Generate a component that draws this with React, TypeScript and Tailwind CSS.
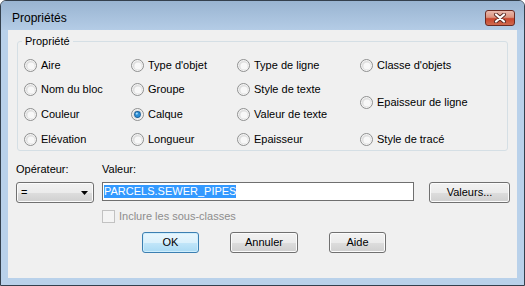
import { twMerge } from "tailwind-merge";
import type { ReactNode } from "react";

const Radio = ({ on }: { on?: boolean }) => (
  <svg width="13" height="13" viewBox="0 0 13 13" className="shrink-0">
    <circle cx="6.5" cy="6.5" r="6" fill="#f4f4f4" stroke="#8e8f8f" />
    <circle cx="6.5" cy="6.5" r="4.6" fill="#dedede" />
    <circle cx="7" cy="7" r="3.6" fill="#f8f8f8" />
    {on && (
      <>
        <circle cx="6.5" cy="6.5" r="3.4" fill="#1b5f99" />
        <circle cx="6.5" cy="6.5" r="2.5" fill="#2d8fd6" />
        <circle cx="5.8" cy="5.6" r="1.1" fill="#a8dcfa" />
      </>
    )}
  </svg>
);

const Option = ({ label, on, className }: { label: string; on?: boolean; className?: string }) => (
  <div className={twMerge("flex items-center gap-[4px]", className)}>
    <Radio on={on} />
    <span>{label}</span>
  </div>
);

const WinButton = ({
  children,
  def,
  className,
}: {
  children: ReactNode;
  def?: boolean;
  className?: string;
}) => (
  <div
    className={twMerge(
      "flex h-[21px] items-center justify-center rounded-[3px] border",
      def
        ? "border-[#3c7fb1] bg-[linear-gradient(#e9f6fd_0%,#dbf1fc_50%,#c2e6f9_51%,#a9daf4_100%)] shadow-[inset_0_0_0_1px_#cfeefd]"
        : "border-[#707070] bg-[linear-gradient(#f2f2f2_0%,#ebebeb_50%,#dddddd_51%,#cfcfcf_100%)] shadow-[inset_0_0_0_1px_#fbfbfb]",
      className
    )}
  >
    {children}
  </div>
);

export default function App() {
  return (
    <div className="h-[286px] w-[525px] bg-white font-['Liberation_Sans',Arial,sans-serif] text-[11px] leading-[13px] text-black">
      <div className="flex h-full w-full flex-col rounded-t-[6px] border border-[#34404d] bg-[#b9d1ea]">
        {/* title bar */}
        <div className="flex h-[29px] items-center justify-between rounded-t-[5px] bg-[linear-gradient(#99b4d1,#b4cce6)] pl-[11px] pr-[9px] pt-[5px]">
          <span className="text-[12px] leading-[14px]">Propriétés</span>
          <div className="flex h-[16px] w-[30px] items-center justify-center rounded-[3px] border border-[#6b2a22] bg-[linear-gradient(#e9b9ad_0%,#dc9480_45%,#c9452d_55%,#cf6a4f_100%)]">
            <svg width="14" height="10" viewBox="0 0 14 10">
              <path d="M3 1.5 L11 8.5 M11 1.5 L3 8.5" stroke="#5a2a24" strokeWidth="4" strokeLinecap="round" />
              <path d="M3 1.5 L11 8.5 M11 1.5 L3 8.5" stroke="#ffffff" strokeWidth="2.2" strokeLinecap="round" />
            </svg>
          </div>
        </div>

        {/* client */}
        <div className="flex flex-1 flex-col px-[7px] pb-[7px]">
          <div className="flex flex-1 flex-col bg-[#f0f0f0]">
            <fieldset className="mx-[9px] mt-[4px] h-[117px] rounded-[3px] border border-[#d5dfe5]">
              <legend className="ml-[4px] px-[3px] leading-[14px]">Propriété</legend>
              <div className="grid grid-cols-[107px_106px_123px_1fr] grid-rows-[repeat(4,24.67px)] pl-[6px] pt-[5px]">
                <Option label="Aire" />
                <Option label="Type d'objet" />
                <Option label="Type de ligne" />
                <Option label="Classe d'objets" />
                <Option label="Nom du bloc" />
                <Option label="Groupe" />
                <Option label="Style de texte" />
                <Option label="Epaisseur de ligne" className="row-span-2" />
                <Option label="Couleur" />
                <Option label="Calque" on />
                <Option label="Valeur de texte" />
                <Option label="Elévation" />
                <Option label="Longueur" />
                <Option label="Epaisseur" />
                <Option label="Style de tracé" />
              </div>
            </fieldset>

            <div className="mt-[12px] flex pl-[8px]">
              <span className="w-[86px]">Opérateur:</span>
              <span>Valeur:</span>
            </div>

            <div className="mt-[6px] flex items-start pl-[8px]">
              <WinButton className="w-[78px] justify-between pl-[4px] pr-[5px]">
                <span>=</span>
                <svg width="7" height="4" viewBox="0 0 7 4">
                  <path d="M0 0 H7 L3.5 4 Z" fill="#000" />
                </svg>
              </WinButton>
              <div className="ml-[8px] flex h-[19px] w-[312px] items-center border border-[#6f6f6f] bg-white px-[1px]">
                <span className="bg-[#3399ff] text-white">PARCELS.SEWER_PIPES</span>
              </div>
              <WinButton className="ml-[15px] w-[81px]">Valeurs...</WinButton>
            </div>

            <div className="mt-[7px] flex items-center gap-[4px] pl-[94px]">
              <div className="h-[13px] w-[13px] border border-[#c2c2c2] bg-[#f4f4f4]" />
              <span className="text-[#8d8d8d]">Inclure les sous-classes</span>
            </div>

            <div className="mt-[9px] flex gap-[31px] pl-[134px]">
              <WinButton def className="w-[57px]">OK</WinButton>
              <WinButton className="w-[68px]">Annuler</WinButton>
              <WinButton className="w-[57px]">Aide</WinButton>
            </div>
          </div>
        </div>
      </div>
    </div>
  );
}
